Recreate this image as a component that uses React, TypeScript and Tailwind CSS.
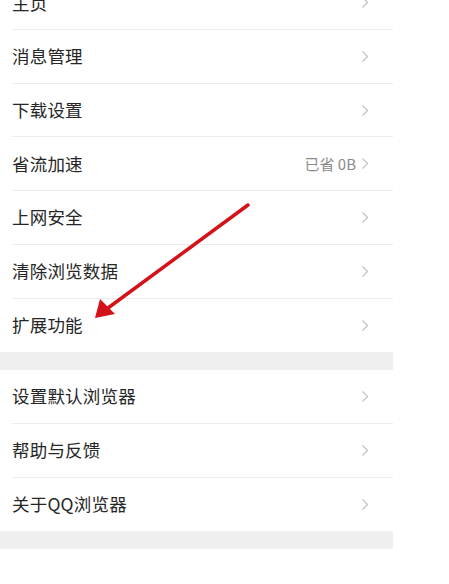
import React from 'react';

const font = { fontFamily: '"Noto Sans CJK SC", "Noto Sans", sans-serif' };

function Chevron() {
  return (
    <svg width="8" height="13" viewBox="0 0 8 13" className="shrink-0">
      <polyline points="1.5,1.5 6.5,6.5 1.5,11.5" fill="none" stroke="#c4c4c4" strokeWidth="1.3" />
    </svg>
  );
}

type Item = { label: string; value?: string };

function Group({ items }: { items: Item[] }) {
  return (
    <div className="bg-white">
      {items.map((item, i) => (
        <div
          key={item.label}
          className={
            'ml-3 h-[53.7px] flex items-center pr-[24px] ' +
            (i < items.length - 1 ? 'border-b border-[#ececec]' : '')
          }
        >
          <span className="flex-1 text-[17.5px] text-[#262626] tracking-[0.2px]">{item.label}</span>
          {item.value && <span className="mr-[5px] text-[15px] text-[#8a8a8a]">{item.value}</span>}
          <Chevron />
        </div>
      ))}
    </div>
  );
}

export default function App() {
  return (
    <div className="relative w-[449px] h-[584px] overflow-hidden bg-white" style={font}>
      <div className="w-[393px] -mt-[23.6px]">
        <Group
          items={[
            { label: '主页' },
            { label: '消息管理' },
            { label: '下载设置' },
            { label: '省流加速', value: '已省 0B' },
            { label: '上网安全' },
            { label: '清除浏览数据' },
            { label: '扩展功能' },
          ]}
        />
        <div className="h-[18px] bg-[#efefef]" />
        <Group
          items={[
            { label: '设置默认浏览器' },
            { label: '帮助与反馈' },
            { label: '关于QQ浏览器' },
          ]}
        />
        <div className="h-[18px] bg-[#efefef]" />
      </div>

      {/* red annotation arrow */}
      <svg className="absolute left-0 top-0 pointer-events-none" width="449" height="584">
        <line x1="248" y1="205" x2="108" y2="308" stroke="#d4121a" strokeWidth="3.5" strokeLinecap="round" />
        <polygon points="95,318 100,299 115,314" fill="#d4121a" />
      </svg>
    </div>
  );
}
